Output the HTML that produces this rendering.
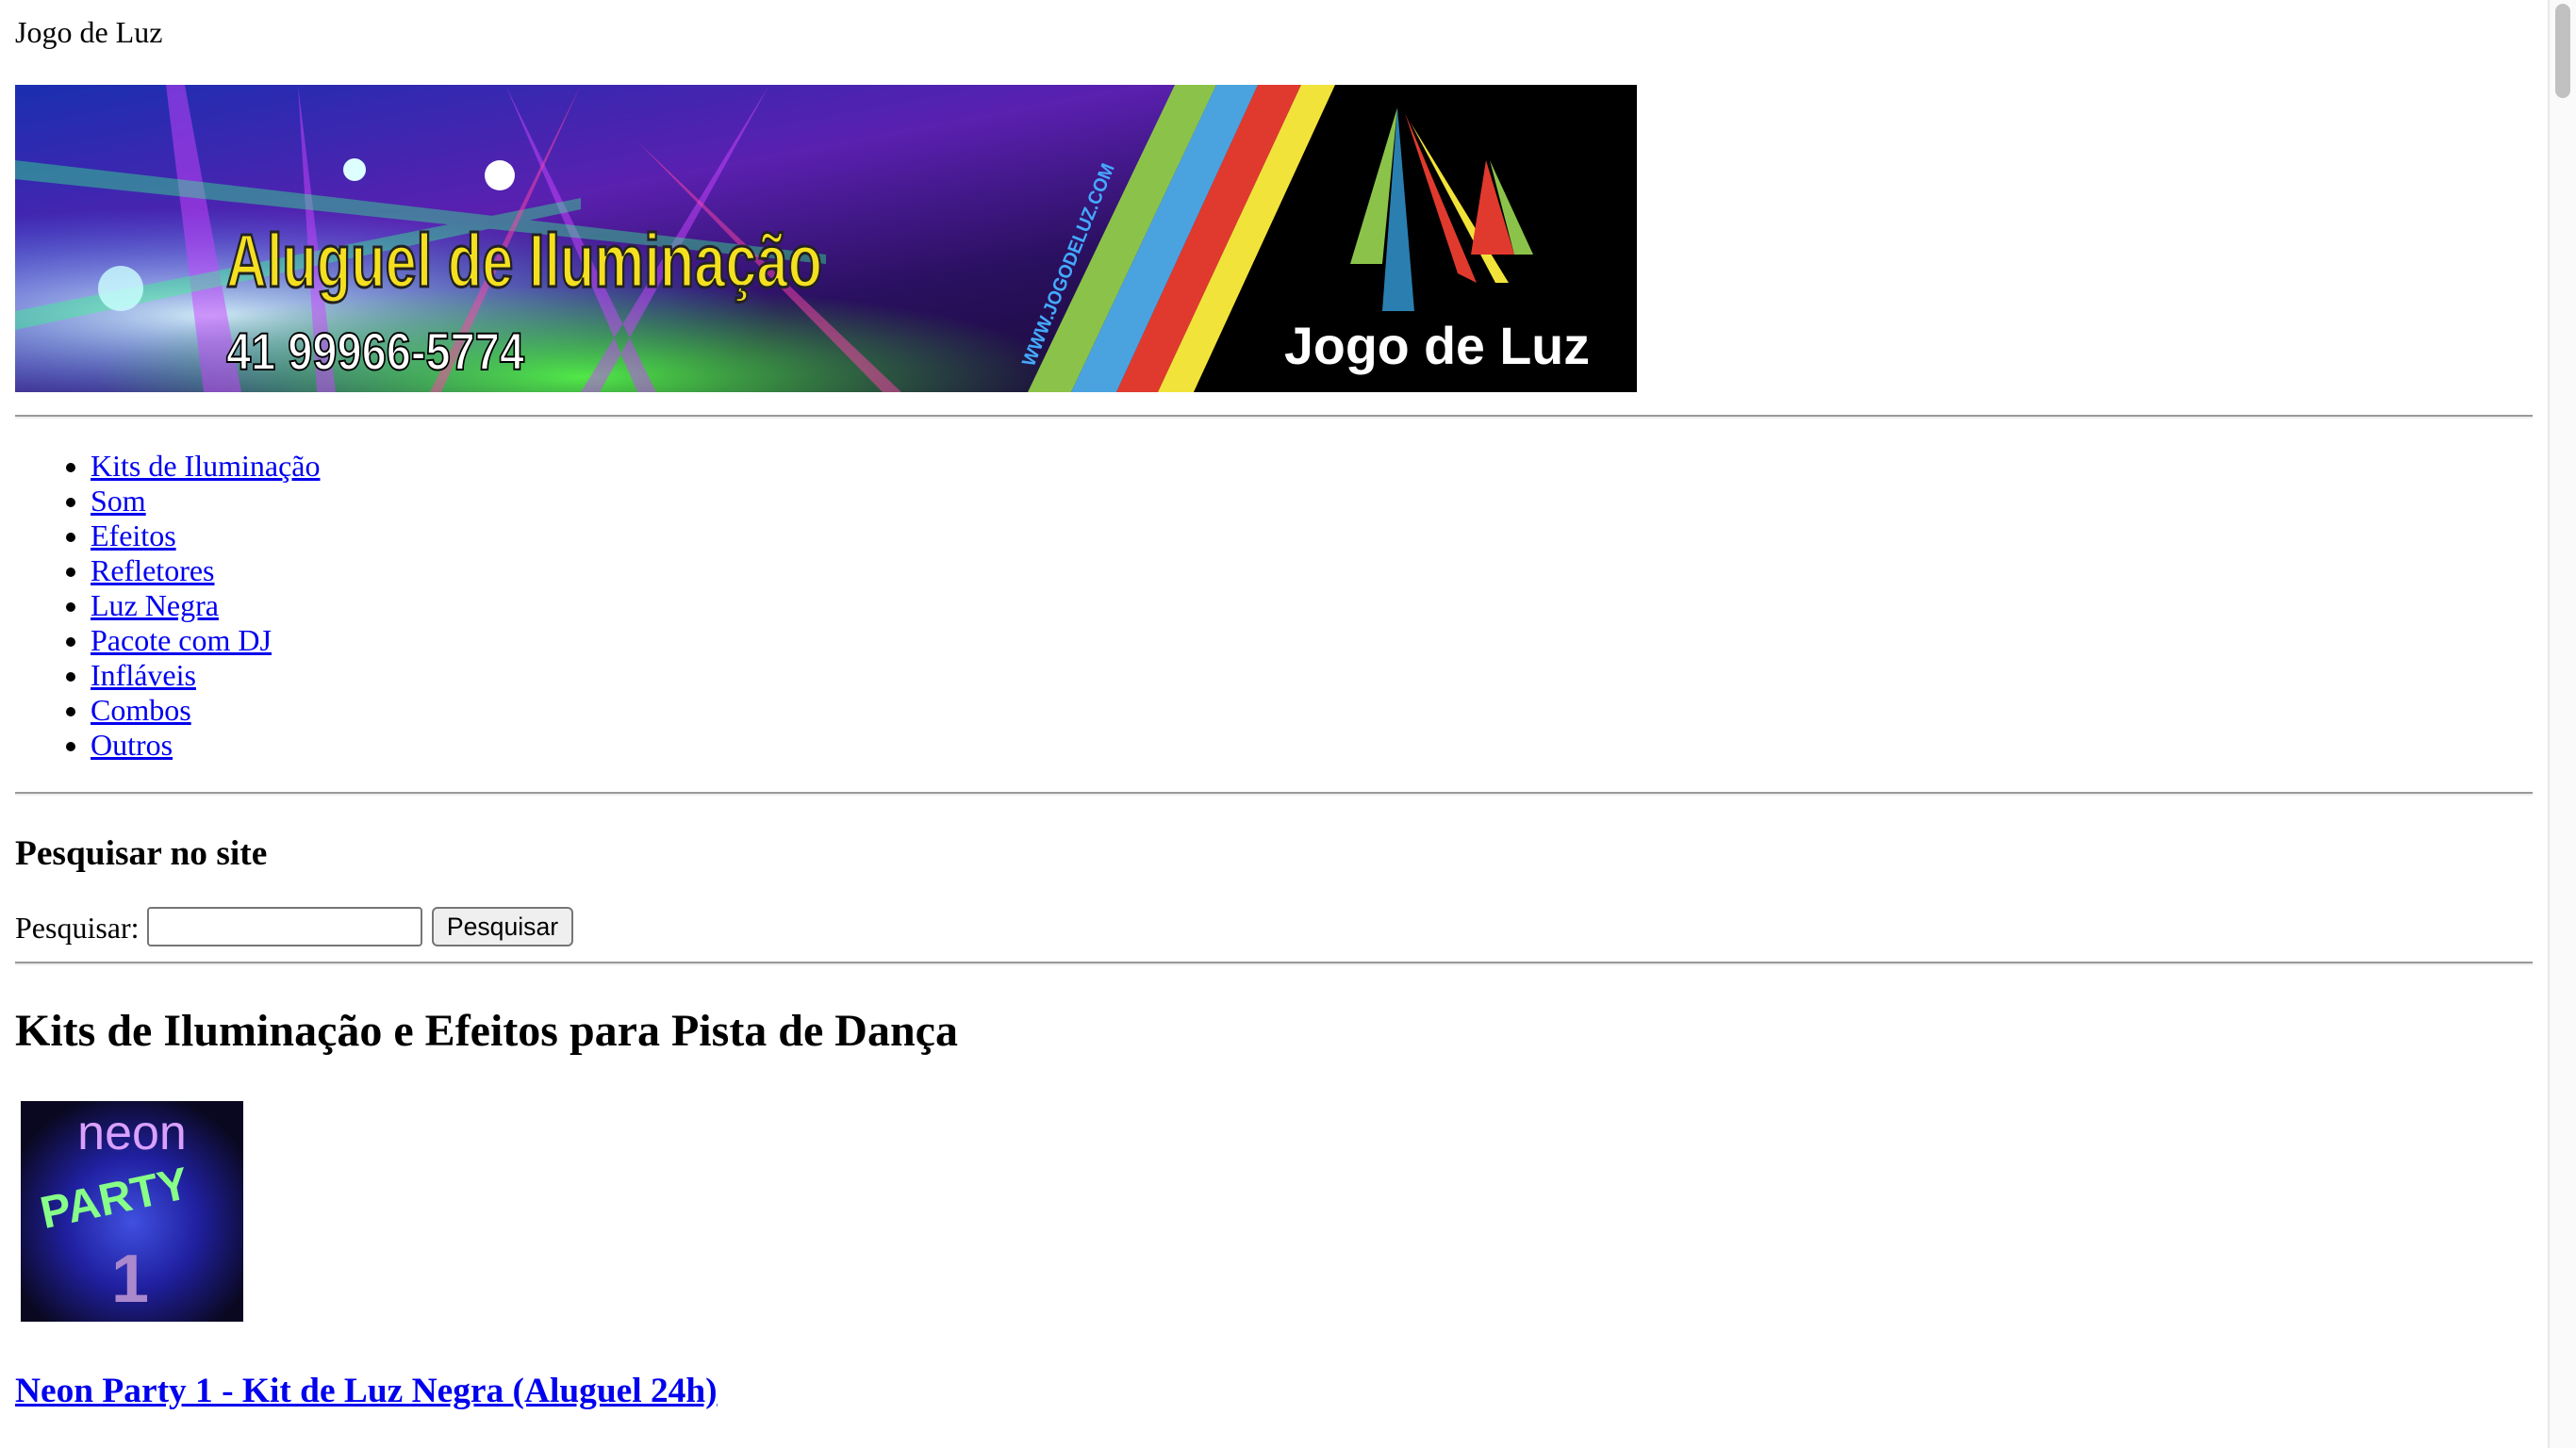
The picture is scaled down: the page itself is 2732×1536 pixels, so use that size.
<!DOCTYPE html>
<html><head><meta charset="utf-8"><style>
html{zoom:2}
body{margin:0;width:1366px;height:768px;overflow:hidden;position:relative;font-family:"Liberation Serif",serif;font-size:16px;color:#000;background:#fff}
.a{position:absolute}
a{color:#0000ee}
hr{position:absolute;left:8px;width:1335px;margin:0;border:0;border-top:1px solid #999;border-bottom:1px solid #eee;height:0}
ul{position:absolute;left:8px;top:238px;margin:0;padding-left:40px;line-height:18.5px}
li{list-style:disc}
</style></head><body>
<div class="a" style="left:8px;top:8px">Jogo de Luz</div>
<div class="a" style="left:8px;top:45px;width:860px;height:163px;overflow:hidden">
<svg width="860" height="163" viewBox="0 0 860 163">
<defs>
<linearGradient id="bg" x1="0" y1="0" x2="1" y2="1">
<stop offset="0" stop-color="#1a2fb0"/><stop offset=".35" stop-color="#5a20b0"/><stop offset=".6" stop-color="#2a1060"/><stop offset="1" stop-color="#100820"/></linearGradient>
<radialGradient id="g1" cx=".12" cy=".75" r=".35"><stop offset="0" stop-color="#dff" stop-opacity=".9"/><stop offset="1" stop-color="#3af" stop-opacity="0"/></radialGradient>
<radialGradient id="g2" cx=".35" cy=".95" r=".3"><stop offset="0" stop-color="#5f4" stop-opacity=".9"/><stop offset="1" stop-color="#3c2" stop-opacity="0"/></radialGradient>
</defs>
<rect width="860" height="163" fill="url(#bg)"/>
<rect width="860" height="163" fill="url(#g1)"/>
<rect width="860" height="163" fill="url(#g2)"/>
<path d="M80 0 L100 163 L120 163 L90 0Z M260 0 L340 163 L330 163 Z M400 0 L300 163 L310 163Z M150 0 L170 163 L160 163Z" fill="#c4f" opacity=".5"/>
<path d="M0 40 L430 90 L430 95 L0 50Z M0 120 L300 60 L300 66 L0 130Z" fill="#3f8" opacity=".4"/>
<path d="M300 0 L220 163 L226 163Z M330 30 L460 163 L470 163Z" fill="#f4a" opacity=".5"/>
<circle cx="257" cy="48" r="8" fill="#fff"/>
<circle cx="180" cy="45" r="6" fill="#dff"/>
<circle cx="56" cy="108" r="12" fill="#cff" opacity=".8"/>
<polygon points="615,0 637,0 560,163 537,163" fill="#8bc34a"/>
<polygon points="637,0 659,0 584,163 560,163" fill="#4aa3df"/>
<polygon points="659,0 682,0 606,163 584,163" fill="#e03a2e"/>
<polygon points="682,0 700,0 625,163 606,163" fill="#f2e33a"/>
<polygon points="700,0 860,0 860,163 625,163" fill="#000"/>
<polygon points="733,12 708,95 725,95" fill="#8bc34a"/>
<polygon points="733,12 725,120 742,120" fill="#2a7fb0"/>
<polygon points="737,15 765,100 775,105" fill="#e03a2e"/>
<polygon points="740,20 785,105 792,105" fill="#f2e33a"/>
<polygon points="780,40 772,90 795,90" fill="#e03a2e"/>
<polygon points="782,40 795,90 805,90" fill="#8bc34a"/>
<text x="112" y="107" font-family="Liberation Sans,sans-serif" font-weight="bold" font-size="40" fill="#f5e020" stroke="#222" stroke-width="1.5" textLength="316" lengthAdjust="spacingAndGlyphs">Aluguel de Iluminação</text>
<text x="112" y="151" font-family="Liberation Sans,sans-serif" font-weight="bold" font-size="28" fill="#fff" stroke="#000" stroke-width="1" textLength="158" lengthAdjust="spacingAndGlyphs">41 99966-5774</text>
<text x="0" y="0" transform="translate(540,150) rotate(-68)" font-family="Liberation Sans,sans-serif" font-weight="bold" font-size="10" fill="#4af" textLength="115" lengthAdjust="spacingAndGlyphs">WWW.JOGODELUZ.COM</text>
<text x="673" y="148" font-family="Liberation Sans,sans-serif" font-weight="bold" font-size="28" fill="#fff" textLength="162" lengthAdjust="spacingAndGlyphs">Jogo de Luz</text>
</svg></div>
<hr style="top:220px">
<ul>
<li><a href="#">Kits de Iluminação</a></li>
<li><a href="#">Som</a></li>
<li><a href="#">Efeitos</a></li>
<li><a href="#">Refletores</a></li>
<li><a href="#">Luz Negra</a></li>
<li><a href="#">Pacote com DJ</a></li>
<li><a href="#">Infláveis</a></li>
<li><a href="#">Combos</a></li>
<li><a href="#">Outros</a></li>
</ul>
<hr style="top:420px">
<div class="a" style="left:8px;top:442px;font-weight:bold;font-size:18.7px">Pesquisar no site</div>
<div class="a" style="left:8px;top:483px">Pesquisar:</div>
<div class="a" style="left:78px;top:481px;width:144px;height:19px;border:1px solid #767676;border-radius:2px;background:#fff"></div>
<div class="a" style="left:229px;top:481px;width:73px;height:19px;border:1px solid #767676;border-radius:3px;background:#efefef;font-family:'Liberation Sans',sans-serif;font-size:13.3px;text-align:center;line-height:19px">Pesquisar</div>
<hr style="top:510px">
<div class="a" style="left:8px;top:533px;font-weight:bold;font-size:24px">Kits de Iluminação e Efeitos para Pista de Dança</div>
<div class="a" style="left:11px;top:584px;width:118px;height:117px;background:radial-gradient(circle at 50% 55%,#4050e0 0%,#2020a0 40%,#0a0820 80%)">
<div class="a" style="left:0;top:2px;width:118px;text-align:center;color:#d9a0ff;font-family:'Liberation Sans',sans-serif;font-size:26px">neon</div>
<div class="a" style="left:10px;top:38px;color:#8f8;font-family:'Liberation Sans',sans-serif;font-weight:bold;font-size:24px;transform:rotate(-12deg)">PARTY</div>
<div class="a" style="left:48px;top:74px;color:#a8c;font-family:'Liberation Sans',sans-serif;font-weight:bold;font-size:36px">1</div>
</div>
<div class="a" style="left:8px;top:727px;font-weight:bold;font-size:18.7px"><a href="#">Neon Party 1 - Kit de Luz Negra (Aluguel 24h)</a></div>
<div class="a" style="left:1351px;top:0;width:15px;height:768px;background:#fafafa;border-left:1px solid #e8e8e8"></div>
<div class="a" style="left:1355px;top:2px;width:8px;height:50px;background:#c1c1c1;border-radius:4px"></div>
</body></html>
